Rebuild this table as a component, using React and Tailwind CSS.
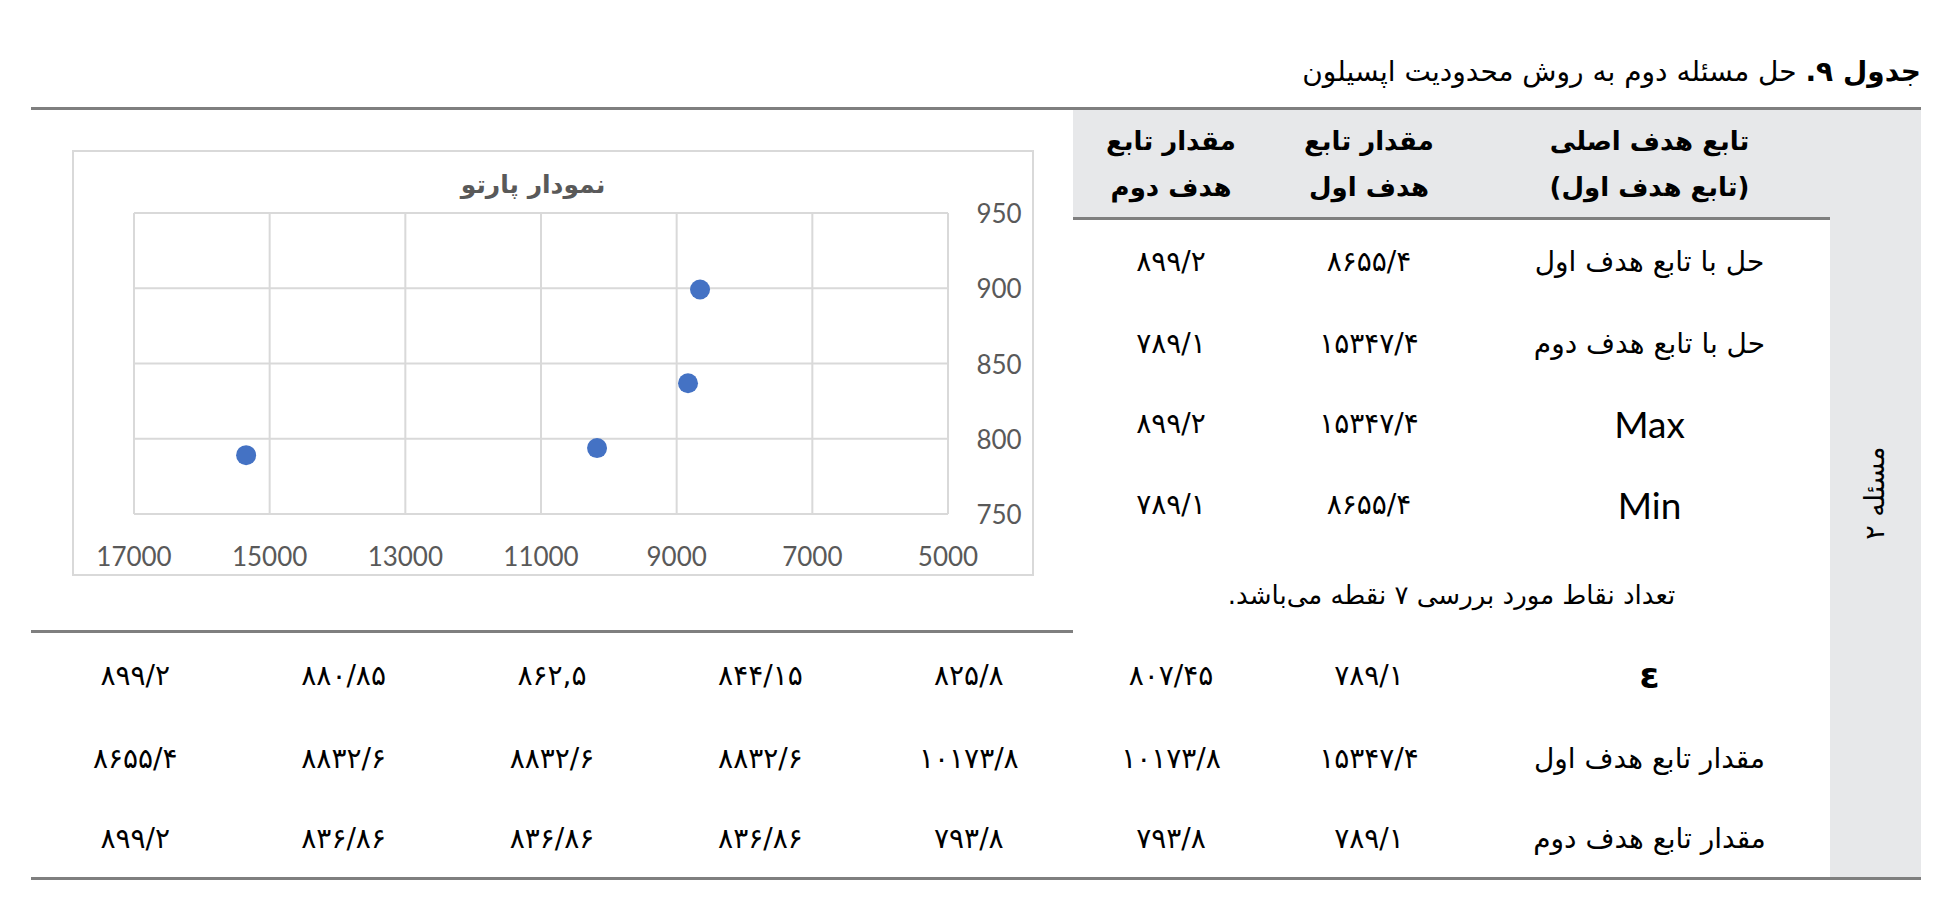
import React from 'react';

const sx = (v) => 62 + ((17000 - v) * 814) / 12000;
const sy = (v) => 63 + ((950 - v) * 301) / 200;

const points = [
  [8655.4, 899.2],
  [8832.6, 836.86],
  [10173.8, 793.8],
  [15347.4, 789.1],
];

const ParetoChart = () => {
  const xs = [17000, 15000, 13000, 11000, 9000, 7000, 5000];
  const ys = [950, 900, 850, 800, 750];
  return (
    <svg width="962" height="426" viewBox="0 0 962 426" className="block">
      <rect x="1" y="1" width="960" height="424" fill="#fff" stroke="#d9d9d9" strokeWidth="2" />
      <text
        x="461"
        y="34"
        textAnchor="middle"
        dominantBaseline="central"
        fill="#595959"
        fontWeight="700"
        fontSize="25"
        fontFamily="DejaVu Sans, sans-serif"
        direction="rtl"
      >
        نمودار پارتو
      </text>
      {xs.map((v) => (
        <line key={'gx' + v} x1={sx(v)} x2={sx(v)} y1={sy(950)} y2={sy(750)} stroke="#d9d9d9" strokeWidth="2" />
      ))}
      {ys.map((v) => (
        <line key={'gy' + v} x1={sx(17000)} x2={sx(5000)} y1={sy(v)} y2={sy(v)} stroke="#d9d9d9" strokeWidth="2" />
      ))}
      {ys.map((v) => (
        <text key={'ly' + v} x="927" y={sy(v)} textAnchor="middle" dominantBaseline="central" fill="#595959" fontSize="26" fontFamily="Lato, sans-serif">
          {v}
        </text>
      ))}
      {xs.map((v) => (
        <text key={'lx' + v} x={sx(v)} y="406" textAnchor="middle" dominantBaseline="central" fill="#595959" fontSize="26" fontFamily="Lato, sans-serif">
          {v}
        </text>
      ))}
      {points.map(([x, y]) => (
        <circle key={x} cx={sx(x)} cy={sy(y)} r="10" fill="#4472c4" />
      ))}
    </svg>
  );
};

const topRows = [
  ['حل با تابع هدف اول', '۸۶۵۵/۴', '۸۹۹/۲'],
  ['حل با تابع هدف دوم', '۱۵۳۴۷/۴', '۷۸۹/۱'],
  ['Max', '۱۵۳۴۷/۴', '۸۹۹/۲'],
  ['Min', '۸۶۵۵/۴', '۷۸۹/۱'],
];

const bottomRows = [
  ['ε', '۷۸۹/۱', '۸۰۷/۴۵', '۸۲۵/۸', '۸۴۴/۱۵', '۸۶۲,۵', '۸۸۰/۸۵', '۸۹۹/۲'],
  ['مقدار تابع هدف اول', '۱۵۳۴۷/۴', '۱۰۱۷۳/۸', '۱۰۱۷۳/۸', '۸۸۳۲/۶', '۸۸۳۲/۶', '۸۸۳۲/۶', '۸۶۵۵/۴'],
  ['مقدار تابع هدف دوم', '۷۸۹/۱', '۷۹۳/۸', '۷۹۳/۸', '۸۳۶/۸۶', '۸۳۶/۸۶', '۸۳۶/۸۶', '۸۹۹/۲'],
];

const Cell = ({ children, latin }) => (
  <div className="flex items-center justify-center whitespace-nowrap">
    {latin ? <span className="font-['Lato',sans-serif] text-[37px]">{children}</span> : children}
  </div>
);

const App = () => {
  return (
    <div
      dir="rtl"
      className="w-[1943px] h-[911px] bg-white text-black font-['DejaVu_Sans',sans-serif] text-[28px] pt-[50px] pr-[22px] pl-[31px]"
    >
      <p className="h-[44px] leading-[44px] text-[28px] mb-[13px]">
        <span className="font-bold">جدول ۹.</span> حل مسئله دوم به روش محدودیت اپسیلون
      </p>

      <div className="grid grid-cols-[91px_361px_200px_196px_repeat(5,1fr)] grid-rows-[110px_84px_80px_80px_82px_87px_85px_82px_77px] border-t-[3px] border-b-[3px] border-[#7f7f7f]">
        <div className="col-start-1 row-start-1 row-span-9 bg-[#e7e8ea] flex items-center justify-center">
          <span className="-rotate-90 whitespace-nowrap text-[27px]">مسئله ۲</span>
        </div>

        <div className="col-start-2 row-start-1 bg-[#e7e8ea] border-b-[3px] border-[#7f7f7f] flex flex-col items-center justify-center font-bold text-[26px] leading-[46px]">
          <span>تابع هدف اصلی</span>
          <span>(تابع هدف اول)</span>
        </div>
        <div className="col-start-3 row-start-1 bg-[#e7e8ea] border-b-[3px] border-[#7f7f7f] flex flex-col items-center justify-center font-bold text-[26px] leading-[46px]">
          <span>مقدار تابع</span>
          <span>هدف اول</span>
        </div>
        <div className="col-start-4 row-start-1 bg-[#e7e8ea] border-b-[3px] border-[#7f7f7f] flex flex-col items-center justify-center font-bold text-[26px] leading-[46px]">
          <span>مقدار تابع</span>
          <span>هدف دوم</span>
        </div>

        <div dir="ltr" className="col-start-5 col-span-5 row-start-1 row-span-6 border-b-[3px] border-[#7f7f7f] pt-[40px] pl-[41px]">
          <ParetoChart />
        </div>

        {topRows.map((r, i) =>
          r.map((c, j) => (
            <Cell key={'t' + i + j} latin={c === 'Max' || c === 'Min'}>
              {c}
            </Cell>
          ))
        )}

        <div className="col-start-2 col-span-3 flex items-start justify-center pt-[30px] text-[26px]">
          تعداد نقاط مورد بررسی ۷ نقطه می‌باشد.
        </div>

        {bottomRows.map((r, i) => (
          <React.Fragment key={'b' + i}>
            <div className="col-start-2 flex items-center justify-center whitespace-nowrap">
              {r[0] === 'ε' ? <span className="font-bold text-[36px]">ε</span> : r[0]}
            </div>
            {r.slice(1).map((c, j) => (
              <Cell key={j}>{c}</Cell>
            ))}
          </React.Fragment>
        ))}
      </div>
    </div>
  );
};

export default App;
